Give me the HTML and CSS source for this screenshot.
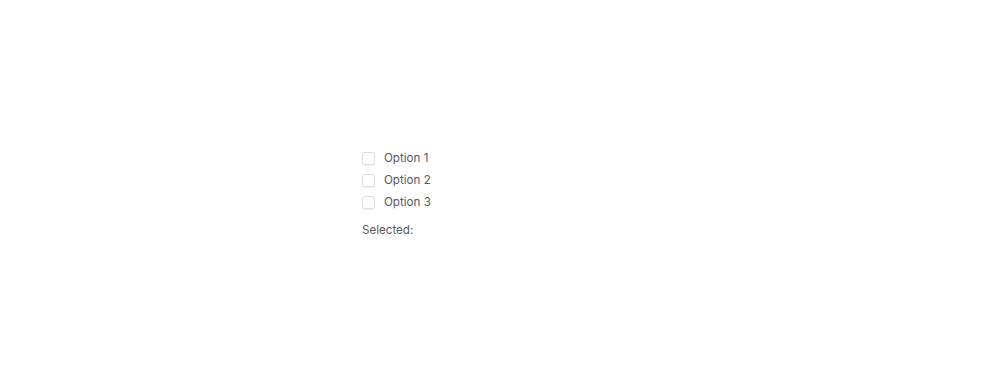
FILE: index.html
```html
<!DOCTYPE html>
<html>
<head>
<meta charset="utf-8">
<link rel="stylesheet" href="styles.css">
</head>
<body>
<div class="page">
  <div class="group">
    <label class="option"><span class="box"></span><span class="label">Option 1</span></label>
    <label class="option"><span class="box"></span><span class="label">Option 2</span></label>
    <label class="option"><span class="box"></span><span class="label">Option 3</span></label>
    <div class="selected">Selected:</div>
  </div>
</div>
</body>
</html>
```
FILE: styles.css
```css
html, body {
  margin: 0;
  padding: 0;
  background: #fff;
}
body {
  font-family: Inter, "Noto Sans", sans-serif;
  font-size: 11.6px;
  color: #585858;
}
.page {
  height: 388px;
  display: flex;
  align-items: center;
  justify-content: center;
}
.group {
  width: 276px;
  display: flex;
  flex-direction: column;
}
.option {
  height: 22px;
  display: flex;
  align-items: center;
  gap: 9px;
}
.box {
  width: 11px;
  height: 11px;
  border: 1px solid #dcdcdc;
  border-radius: 3px;
  box-shadow: 0 1px 1px rgba(0,0,0,0.06);
  background: #fff;
}
.label {
  line-height: 22px;
}
.selected {
  margin-top: 6px;
  line-height: 22px;
}
```
